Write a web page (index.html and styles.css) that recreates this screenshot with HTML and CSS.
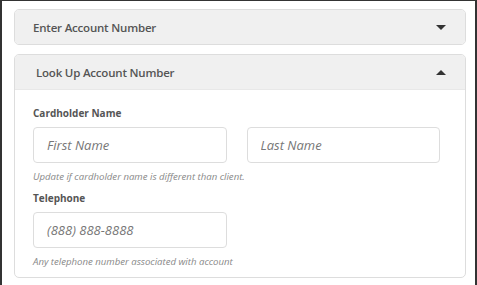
FILE: index.html
```html
<!doctype html>
<html>

<head>
    <meta charset="UTF-8">
    <title>Account Lookup</title>
    <link rel="stylesheet" href="styles.css">
</head>

<body>
    <div class="frame">
        <div class="panel">
            <div class="panel-head">
                <span class="panel-title">Enter Account Number</span>
                <span class="caret caret-down"></span>
            </div>
        </div>
        <div class="panel">
            <div class="panel-head">
                <span class="panel-title indent">Look Up Account Number</span>
                <span class="caret caret-up"></span>
            </div>
            <div class="panel-body">
                <label class="field-label">Cardholder Name</label>
                <div class="name-row">
                    <input class="text-input" type="text" placeholder="First Name">
                    <input class="text-input" type="text" placeholder="Last Name">
                </div>
                <p class="hint">Update if cardholder name is different than client.</p>
                <label class="field-label">Telephone</label>
                <div class="name-row">
                    <input class="text-input" type="text" placeholder="(888) 888-8888">
                </div>
                <p class="hint last">Any telephone number associated with account</p>
            </div>
        </div>
    </div>
</body>

</html>
```

FILE: styles.css
```css
* {
    margin: 0;
    padding: 0;
    box-sizing: border-box;
}

html,
body {
    width: 100%;
    height: 100%;
    overflow: hidden;
    background-color: #fff;
}

body {
    font-family: "Open Sans", "Liberation Sans", sans-serif;
    color: #555;
}

.frame {
    width: 477px;
    height: 100%;
    border-top: 1px solid #333;
    border-left: 2px solid #333;
    border-right: 2px solid #333;
    padding: 8px 9px 0 12px;
}

.panel {
    border: 1px solid #ddd;
    border-radius: 5px;
    background-color: #fff;
    overflow: hidden;
}

.panel+.panel {
    margin-top: 9px;
}

.panel-head {
    height: 34px;
    background-color: #f0f0f0;
    display: flex;
    align-items: center;
    justify-content: space-between;
    padding: 0 19px 0 18px;
}

.panel+.panel .panel-head {
    height: 35px;
    border-bottom: 1px solid #e8e8e8;
}

.panel-title {
    font-size: 11.5px;
    font-weight: 600;
    color: #555;
    letter-spacing: -0.2px;
}

.panel-title.indent {
    padding-left: 3px;
}

.caret {
    width: 0;
    height: 0;
    border-left: 5px solid transparent;
    border-right: 5px solid transparent;
}

.caret-down {
    border-top: 5px solid #333;
}

.caret-up {
    border-bottom: 5px solid #333;
}

.panel-body {
    padding: 16px 25px 9px 18px;
}

.field-label {
    display: block;
    font-size: 10px;
    font-weight: 700;
    color: #555;
    line-height: 14px;
    margin-bottom: 7px;
}

.name-row {
    display: grid;
    grid-template-columns: 1fr 1fr;
    gap: 20px;
}

.text-input {
    height: 36px;
    border: 1px solid #ddd;
    border-radius: 4px;
    padding: 0 13px;
    font-family: "Open Sans", "Liberation Sans", sans-serif;
    font-size: 13px;
    font-style: italic;
    color: #555;
    outline: none;
}

.text-input::placeholder {
    color: #777;
}

.hint {
    font-size: 9.6px;
    font-style: italic;
    color: #888;
    line-height: 12px;
    margin-top: 8px;
    margin-bottom: 8px;
}

.hint.last {
    margin-bottom: 0;
}
```
